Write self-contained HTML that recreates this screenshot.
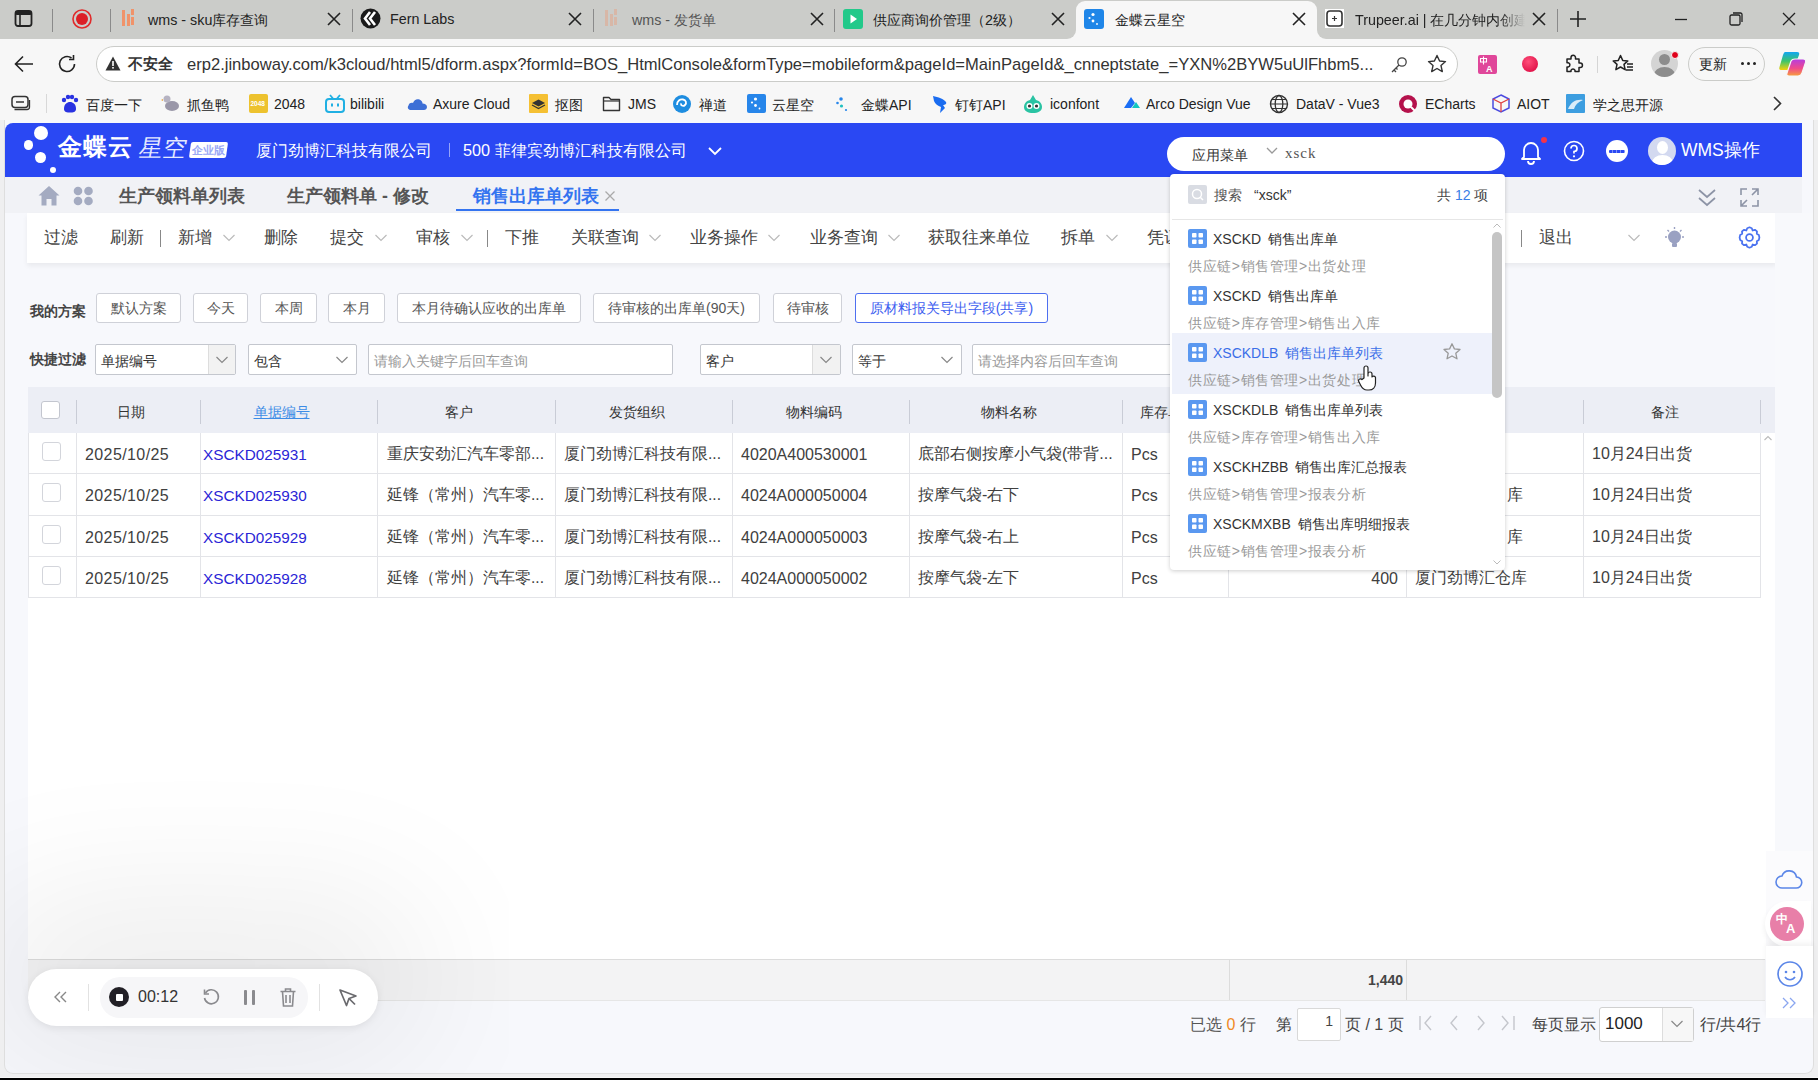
<!DOCTYPE html>
<html><head><meta charset="utf-8">
<style>
*{margin:0;padding:0;box-sizing:border-box;}
html,body{width:1818px;height:1080px;overflow:hidden;background:#f7f7f7;font-family:"Liberation Sans",sans-serif;color:#333;}
.a{position:absolute;}
.t{position:absolute;white-space:nowrap;line-height:1.15;}
/* browser chrome */
#tabbar{left:0;top:0;width:1818px;height:39px;background:#cbccc9;}
#toolbar{left:0;top:39px;width:1818px;height:47px;background:#f7f7f7;}
#bookmarks{left:0;top:86px;width:1818px;height:36px;background:#f7f7f7;}
.tabtxt{font-size:14.3px;color:#222;top:11px;}
.tabx{font-size:18px;color:#222;top:7px;}
.sep{width:1px;background:#8a8a8a;}
#page{left:0;top:120px;width:1818px;height:957px;background:#efeff0;}
#frame{left:4px;top:120px;width:1810px;height:954px;background:#f7f8fc;border:1px solid #dedede;border-top:none;border-radius:0 0 9px 9px;}
#black{left:0;top:1078px;width:1818px;height:2px;background:#000;}
.cj{display:inline-block;width:1em;height:1em;vertical-align:-0.12em;position:relative}.cj::after{content:"";position:absolute;left:.1em;right:.1em;top:.07em;bottom:.07em;background:currentColor;opacity:.32;border-radius:.08em}.cjp{display:inline-block;width:1em;height:1em}.cjb::after{opacity:.45}
</style></head><body>
<div id="tabbar" class="a"></div>
<div id="toolbar" class="a"></div>
<!-- TABBAR -->
<svg class="a" style="left:14px;top:9px" width="20" height="20" viewBox="0 0 20 20"><rect x="1.5" y="2" width="16" height="15" rx="2.5" fill="none" stroke="#222" stroke-width="1.8"/><rect x="1.5" y="2" width="16" height="4" rx="1.5" fill="#222"/><line x1="6" y1="5" x2="6" y2="17" stroke="#222" stroke-width="1.6"/></svg>
<div class="a sep" style="left:52px;top:9px;height:23px"></div>
<svg class="a" style="left:71px;top:8px" width="22" height="22" viewBox="0 0 22 22"><circle cx="11" cy="11" r="9" fill="none" stroke="#e02a2a" stroke-width="1.6"/><circle cx="11" cy="11" r="6" fill="#dc1f26"/></svg>
<div class="a sep" style="left:110px;top:9px;height:23px"></div>
<svg class="a" style="left:121px;top:8px" width="15" height="20" viewBox="0 0 15 20"><rect x="1" y="2" width="3" height="16" fill="#f0936a"/><rect x="6" y="6" width="3" height="12" fill="#f0936a"/><rect x="10" y="1" width="3" height="6" fill="#f0936a"/><rect x="10" y="9" width="3" height="8" fill="#f0936a"/></svg>
<div class="t tabtxt" style="padding-top:.08em;left:148px">wms - sku库存查询</div>
<svg class="a" style="left:326px;top:11px" width="16" height="16" viewBox="0 0 16 16"><path d="M2 2L14 14M14 2L2 14" stroke="#222" stroke-width="1.6"/></svg>
<div class="a sep" style="left:352px;top:9px;height:23px"></div>
<svg class="a" style="left:360px;top:8px" width="21" height="21" viewBox="0 0 21 21"><circle cx="10.5" cy="10.5" r="10" fill="#1a1a1a"/><path d="M10 4L5 10.5L10 17M15 4L10 10.5L15 17" fill="none" stroke="#fff" stroke-width="2.6"/></svg>
<div class="t tabtxt" style="left:390px">Fern Labs</div>
<svg class="a" style="left:567px;top:11px" width="16" height="16" viewBox="0 0 16 16"><path d="M2 2L14 14M14 2L2 14" stroke="#222" stroke-width="1.6"/></svg>
<div class="a sep" style="left:593px;top:9px;height:23px"></div>
<svg class="a" style="left:604px;top:8px" width="15" height="20" viewBox="0 0 15 20" opacity="0.35"><rect x="1" y="2" width="3" height="16" fill="#f0936a"/><rect x="6" y="6" width="3" height="12" fill="#f0936a"/><rect x="10" y="1" width="3" height="6" fill="#f0936a"/><rect x="10" y="9" width="3" height="8" fill="#f0936a"/></svg>
<div class="t tabtxt" style="padding-top:.08em;left:632px;color:#555">wms - 发货单</div>
<svg class="a" style="left:809px;top:11px" width="16" height="16" viewBox="0 0 16 16"><path d="M2 2L14 14M14 2L2 14" stroke="#222" stroke-width="1.6"/></svg>
<div class="a sep" style="left:834px;top:9px;height:23px"></div>
<svg class="a" style="left:843px;top:9px" width="20" height="20" viewBox="0 0 20 20"><rect x="0" y="0" width="20" height="20" rx="3" fill="#22c98a"/><path d="M7.5 5.5L14 10L7.5 14.5Z" fill="#fff"/></svg>
<div class="t tabtxt" style="padding-top:.08em;left:873px">供应商询价管理（2级）</div>
<svg class="a" style="left:1050px;top:11px" width="16" height="16" viewBox="0 0 16 16"><path d="M2 2L14 14M14 2L2 14" stroke="#222" stroke-width="1.6"/></svg>
<!-- active tab -->
<div class="a" style="left:1066px;top:28px;width:261px;height:12px;background:#f7f7f7"></div><div class="a" style="left:1066px;top:0px;width:10px;height:39px;background:#cbccc9;border-radius:0 0 9px 0"></div><div class="a" style="left:1317px;top:0px;width:10px;height:39px;background:#cbccc9;border-radius:0 0 0 9px"></div><div class="a" style="left:1076px;top:1px;width:241px;height:40px;background:#f7f7f7;border-radius:9px 9px 0 0;"></div>
<svg class="a" style="left:1084px;top:9px" width="20" height="20" viewBox="0 0 20 20"><rect x="0" y="0" width="20" height="20" rx="3" fill="#1f86e8"/><circle cx="9" cy="5.5" r="1.6" fill="#fff"/><circle cx="5.5" cy="9" r="1.1" fill="#fff"/><circle cx="9" cy="12" r="1.4" fill="#fff"/><circle cx="13" cy="15" r="0.9" fill="#fff"/></svg>
<div class="t tabtxt" style="padding-top:.08em;left:1115px">金蝶云星空</div>
<svg class="a" style="left:1291px;top:11px" width="16" height="16" viewBox="0 0 16 16"><path d="M2 2L14 14M14 2L2 14" stroke="#222" stroke-width="1.6"/></svg>
<svg class="a" style="left:1325px;top:9px" width="19" height="19" viewBox="0 0 19 19"><rect x="0" y="0" width="19" height="19" fill="#fff"/><rect x="2" y="2" width="15" height="15" rx="3" fill="none" stroke="#333" stroke-width="1.6"/><path d="M9.5 7V12M7 9.5H12" stroke="#333" stroke-width="1.2"/></svg>
<div class="t tabtxt" style="padding-top:.08em;left:1355px;width:170px;overflow:hidden;-webkit-mask-image:linear-gradient(90deg,#000 85%,transparent)">Trupeer.ai | 在几分钟内创建</div>
<svg class="a" style="left:1531px;top:11px" width="16" height="16" viewBox="0 0 16 16"><path d="M2 2L14 14M14 2L2 14" stroke="#222" stroke-width="1.6"/></svg>
<div class="a sep" style="left:1557px;top:9px;height:23px"></div>
<svg class="a" style="left:1569px;top:10px" width="18" height="18" viewBox="0 0 18 18"><path d="M9 1V17M1 9H17" stroke="#222" stroke-width="1.6"/></svg>
<svg class="a" style="left:1673px;top:11px" width="16" height="16" viewBox="0 0 16 16"><path d="M2 8.5H14" stroke="#222" stroke-width="1.3"/></svg>
<svg class="a" style="left:1728px;top:11px" width="16" height="16" viewBox="0 0 16 16"><rect x="2" y="4" width="10" height="10" rx="1.5" fill="none" stroke="#222" stroke-width="1.3"/><path d="M5 2H12.5A1.5 1.5 0 0 1 14 3.5V11" fill="none" stroke="#222" stroke-width="1.3"/></svg>
<svg class="a" style="left:1781px;top:11px" width="16" height="16" viewBox="0 0 16 16"><path d="M2 2L14 14M14 2L2 14" stroke="#222" stroke-width="1.3"/></svg>

<div id="bookmarks" class="a"></div>

<!-- TOOLBAR -->
<svg class="a" style="left:13px;top:53px" width="22" height="22" viewBox="0 0 22 22"><path d="M20 11H3M10 3.5L2.5 11L10 18.5" fill="none" stroke="#222" stroke-width="1.6"/></svg>
<svg class="a" style="left:56px;top:53px" width="22" height="22" viewBox="0 0 22 22"><path d="M18.5 11A7.5 7.5 0 1 1 15.5 5" fill="none" stroke="#222" stroke-width="1.6"/><path d="M17.5 2V6.5H13" fill="none" stroke="#222" stroke-width="1.6"/></svg>
<div class="a" style="left:96px;top:46px;width:1362px;height:36px;background:#fff;border:1px solid #cbccc9;border-radius:18px;"></div>
<svg class="a" style="left:105px;top:56px" width="16" height="15" viewBox="0 0 16 15"><path d="M8 0.5L15.5 14.5H0.5Z" fill="#333"/><rect x="7.2" y="5" width="1.6" height="5" fill="#fff"/><rect x="7.2" y="11" width="1.6" height="1.6" fill="#fff"/></svg>
<div class="t" style="padding-top:.08em;left:128px;top:54px;font-size:15px;font-weight:bold;color:#333">不安全</div>
<div class="t" style="left:187px;top:55px;font-size:16.57px;color:#333">erp2.jinboway.com/k3cloud/html5/dform.aspx?formId=BOS_HtmlConsole&amp;formType=mobileform&amp;pageId=MainPageId&amp;_cnneptstate_=YXN%2BYW5uUlFhbm5...</div>
<svg class="a" style="left:1390px;top:56px" width="18" height="18" viewBox="0 0 18 18"><circle cx="12" cy="6" r="4.2" fill="none" stroke="#444" stroke-width="1.3"/><path d="M9 9L2 16M4 14L6 16M6 12L7.5 13.5" fill="none" stroke="#444" stroke-width="1.3"/></svg>
<svg class="a" style="left:1427px;top:54px" width="20" height="20" viewBox="0 0 20 20"><path d="M10 1.5L12.6 7L18.5 7.6L14 11.6L15.3 17.6L10 14.5L4.7 17.6L6 11.6L1.5 7.6L7.4 7Z" fill="none" stroke="#333" stroke-width="1.4" stroke-linejoin="round"/></svg>
<svg class="a" style="left:1478px;top:55px" width="19" height="19" viewBox="0 0 19 19"><rect width="19" height="19" rx="2" fill="#e0479a"/><path d="M2.5 3.5H8.5V7H2.5Z M5.5 1.5V9.5" fill="none" stroke="#fff" stroke-width="1.1"/><text x="8" y="17" font-size="9" font-weight="bold" fill="#fff" font-family="Liberation Sans">A</text></svg>
<div class="a" style="left:1522px;top:56px;width:16px;height:16px;border-radius:50%;background:radial-gradient(circle at 40% 35%,#ff4f7a,#d8003a)"></div>
<svg class="a" style="left:1563px;top:54px" width="21" height="21" viewBox="0 0 21 21"><path d="M8 3.5A2.2 2.2 0 0 1 12.5 3.5V5H16V9H17.2A2.2 2.2 0 0 1 17.2 13.5H16V17.5H12V16.2A2.2 2.2 0 0 0 8 16.2V17.5H4V13H5.2A2.2 2.2 0 0 0 5.2 8.7H4V5H8Z" fill="none" stroke="#222" stroke-width="1.5" stroke-linejoin="round"/></svg>
<div class="a" style="left:1597px;top:56px;width:1px;height:17px;background:#d5d5d5"></div>
<svg class="a" style="left:1612px;top:54px" width="22" height="20" viewBox="0 0 22 20"><path d="M8.5 1.5L10.7 6.4L15.8 6.9L12 10.4L13.1 15.6L8.5 13L3.9 15.6L5 10.4L1.2 6.9L6.3 6.4Z" fill="none" stroke="#222" stroke-width="1.5" stroke-linejoin="round"/><path d="M15 10H21M15 13H21M13.5 16H21" stroke="#222" stroke-width="1.4"/></svg>
<div class="a" style="left:1651px;top:50px;width:27px;height:27px;border-radius:50%;background:#d4d4d4;overflow:hidden"><div class="a" style="left:8px;top:4px;width:11px;height:11px;border-radius:50%;background:#8d8d8d"></div><div class="a" style="left:3px;top:17px;width:21px;height:16px;border-radius:50%;background:#8d8d8d"></div></div>
<div class="a" style="left:1671px;top:51px;width:8px;height:8px;border-radius:50%;background:#e0001a;border:1px solid #f7f7f7"></div>
<div class="a" style="left:1688px;top:47px;width:77px;height:34px;border:1px solid #cbccc9;border-radius:17px;"></div>
<div class="t" style="padding-top:.08em;left:1699px;top:55px;font-size:14px;color:#222">更新</div>
<div class="a" style="left:1741px;top:62px;width:3px;height:3px;border-radius:50%;background:#222"></div><div class="a" style="left:1747px;top:62px;width:3px;height:3px;border-radius:50%;background:#222"></div><div class="a" style="left:1753px;top:62px;width:3px;height:3px;border-radius:50%;background:#222"></div>
<svg class="a" style="left:1778px;top:51px" width="29" height="26" viewBox="0 0 29 26"><defs><linearGradient id="cpl" x1="0" y1="0" x2="0" y2="1"><stop offset="0" stop-color="#12a6f2"/><stop offset=".5" stop-color="#3cc46c"/><stop offset="1" stop-color="#f4d20a"/></linearGradient><linearGradient id="cpr" x1="0" y1="0" x2="0" y2="1"><stop offset="0" stop-color="#b53ce2"/><stop offset=".55" stop-color="#f04a8c"/><stop offset="1" stop-color="#f7a03a"/></linearGradient></defs><path d="M7 1L19 1Q22 1 21 4L16 17Q15 19 12 19L3 19Q0.5 19 1.5 16L5 4Q6 1 7 1Z" fill="url(#cpl)"/><path d="M17 8L25 8Q28.5 8 27.5 11.5L24 22Q23 25 20 25L11 25Q8 25 9 22L13 10Q14 8 17 8Z" fill="url(#cpr)" stroke="#f7f7f7" stroke-width="1.2"/></svg>
<!-- BOOKMARKS -->
<svg class="a" style="left:11px;top:95px" width="20" height="17" viewBox="0 0 20 17"><rect x="1" y="1.5" width="16" height="11" rx="3" fill="none" stroke="#333" stroke-width="1.5"/><path d="M5 7H13" stroke="#333" stroke-width="1.5"/><path d="M3.5 14.5H16A2.5 2.5 0 0 0 18.5 12V5" fill="none" stroke="#333" stroke-width="1.3"/></svg>
<div class="a" style="left:46px;top:94px;width:1px;height:19px;background:#d8d8d8"></div>
<svg class="a" style="left:60px;top:94px" width="20" height="20" viewBox="0 0 20 20"><circle cx="4" cy="6" r="2.2" fill="#2932e1"/><circle cx="8" cy="3" r="2.2" fill="#2932e1"/><circle cx="12" cy="3" r="2.2" fill="#2932e1"/><circle cx="16" cy="6" r="2.2" fill="#2932e1"/><path d="M4 15C4 10 7 8 10 8C13 8 16 10 16 15C16 18 13 18.5 10 18.5C7 18.5 4 18 4 15Z" fill="#2932e1"/></svg>
<div class="t" style="padding-top:.08em;left:86px;top:96px;font-size:14px;color:#222">百度一下</div>
<svg class="a" style="left:161px;top:94px" width="20" height="20" viewBox="0 0 20 20"><ellipse cx="11" cy="12" rx="7" ry="5" fill="#9a97a8"/><circle cx="6" cy="5" r="3.5" fill="#b6b3c2"/><path d="M2 5L0 6L2 7Z" fill="#e8a33d"/></svg>
<div class="t" style="padding-top:.08em;left:187px;top:96px;font-size:14px;color:#222">抓鱼鸭</div>
<svg class="a" style="left:249px;top:94px" width="20" height="20" viewBox="0 0 20 20"><rect x="0" y="0" width="19" height="19" rx="2" fill="#edc22e"/><text x="1.5" y="12" font-size="6.5" fill="#fff" font-family="Liberation Sans" font-weight="bold">2048</text></svg>
<div class="t" style="left:274px;top:96px;font-size:14px;color:#222">2048</div>
<svg class="a" style="left:325px;top:94px" width="20" height="20" viewBox="0 0 20 20"><rect x="1" y="5" width="18" height="13" rx="3" fill="none" stroke="#20b0e3" stroke-width="2"/><path d="M5 1L8 4.5M15 1L12 4.5" stroke="#20b0e3" stroke-width="1.8"/><rect x="6" y="9.5" width="2" height="3" fill="#20b0e3"/><rect x="12" y="9.5" width="2" height="3" fill="#20b0e3"/></svg>
<div class="t" style="left:350px;top:96px;font-size:14px;color:#222">bilibili</div>
<svg class="a" style="left:407px;top:94px" width="20" height="20" viewBox="0 0 20 20"><path d="M4 16C1 16 0 13.5 1.5 11.5C2 9 4.5 8.5 6 9C7 5.5 10 4.5 12.5 5.5C15 6.5 15.5 8.5 15.5 9.5C18 9.5 20 11 20 13C20 15 18.5 16 17 16Z" fill="#3d6fd6"/></svg>
<div class="t" style="left:433px;top:96px;font-size:14px;color:#222">Axure Cloud</div>
<svg class="a" style="left:529px;top:94px" width="20" height="20" viewBox="0 0 20 20"><rect x="0" y="0" width="19" height="19" rx="1" fill="#f5c033"/><path d="M3 9L9.5 5.5L16 9L9.5 12.5Z" fill="#333"/><path d="M3 11L9.5 14.5L16 11" fill="none" stroke="#333" stroke-width="1.3"/></svg>
<div class="t" style="padding-top:.08em;left:555px;top:96px;font-size:14px;color:#222">抠图</div>
<svg class="a" style="left:602px;top:94px" width="20" height="20" viewBox="0 0 20 20"><path d="M1.5 3.5H7L9 5.5H17.5V16.5H1.5Z" fill="none" stroke="#333" stroke-width="1.4" stroke-linejoin="round"/><path d="M1.5 7H17.5" stroke="#333" stroke-width="1.2"/></svg>
<div class="t" style="left:628px;top:96px;font-size:14px;color:#222">JMS</div>
<svg class="a" style="left:672px;top:94px" width="20" height="20" viewBox="0 0 20 20"><circle cx="10" cy="10" r="9" fill="#1e8de0"/><path d="M5 11C5 7 8 5 11 5.5C14 6 15 9 13 11C11 13 8 11 9.5 9.5" fill="none" stroke="#fff" stroke-width="1.8"/></svg>
<div class="t" style="padding-top:.08em;left:699px;top:96px;font-size:14px;color:#222">禅道</div>
<svg class="a" style="left:747px;top:94px" width="20" height="20" viewBox="0 0 20 20"><rect x="0" y="0" width="19" height="19" rx="2" fill="#2786ea"/><circle cx="8.5" cy="5" r="1.6" fill="#fff"/><circle cx="5" cy="8.5" r="1.1" fill="#fff"/><circle cx="8.5" cy="11.5" r="1.4" fill="#fff"/><circle cx="12.5" cy="14.5" r="0.9" fill="#fff"/></svg>
<div class="t" style="padding-top:.08em;left:772px;top:96px;font-size:14px;color:#222">云星空</div>
<svg class="a" style="left:835px;top:94px" width="20" height="20" viewBox="0 0 20 20"><circle cx="6" cy="5" r="1.8" fill="#2786ea"/><circle cx="2.5" cy="9" r="1.3" fill="#2786ea"/><circle cx="6.5" cy="12" r="1.6" fill="#20c0c0"/><circle cx="11" cy="16" r="1.1" fill="#2786ea"/></svg>
<div class="t" style="padding-top:.08em;left:861px;top:96px;font-size:14px;color:#222">金蝶API</div>
<svg class="a" style="left:931px;top:94px" width="20" height="20" viewBox="0 0 20 20"><path d="M2 2C7 3 13 5 15 8C16 10 14 11 12 11L14 14L9 19L10 13C7 12 4 10 3 7Z" fill="#1a6cf0"/></svg>
<div class="t" style="padding-top:.08em;left:955px;top:96px;font-size:14px;color:#222">钉钉API</div>
<svg class="a" style="left:1023px;top:94px" width="20" height="20" viewBox="0 0 20 20"><path d="M10 1L13 6C17 7 19 10 19 13C19 17 15 19 10 19C5 19 1 17 1 13C1 10 3 7 7 6Z" fill="#2ac3a3"/><circle cx="6.5" cy="12" r="3" fill="#fff"/><circle cx="13.5" cy="12" r="3" fill="#fff"/><circle cx="6.5" cy="12" r="1.6" fill="#333"/><circle cx="13.5" cy="12" r="1.6" fill="#333"/></svg>
<div class="t" style="left:1050px;top:96px;font-size:14px;color:#222">iconfont</div>
<svg class="a" style="left:1123px;top:94px" width="20" height="20" viewBox="0 0 20 20"><path d="M1 14L8 3L12 9L8 14Z" fill="#1b6ef5"/><path d="M9 14L13 8L17 14Z" fill="#11c6bf"/></svg>
<div class="t" style="left:1146px;top:96px;font-size:14px;color:#222">Arco Design Vue</div>
<svg class="a" style="left:1269px;top:94px" width="20" height="20" viewBox="0 0 20 20"><circle cx="10" cy="10" r="8.5" fill="none" stroke="#333" stroke-width="1.4"/><ellipse cx="10" cy="10" rx="3.8" ry="8.5" fill="none" stroke="#333" stroke-width="1.3"/><path d="M1.5 10H18.5M3 5.5H17M3 14.5H17" stroke="#333" stroke-width="1.2"/></svg>
<div class="t" style="left:1296px;top:96px;font-size:14px;color:#222">DataV - Vue3</div>
<svg class="a" style="left:1398px;top:94px" width="20" height="20" viewBox="0 0 20 20"><circle cx="10" cy="10" r="9" fill="#b5124c"/><circle cx="10" cy="10" r="4.5" fill="#fff"/><path d="M13 13L17 17" stroke="#fff" stroke-width="2"/></svg>
<div class="t" style="left:1425px;top:96px;font-size:14px;color:#222">ECharts</div>
<svg class="a" style="left:1491px;top:94px" width="20" height="20" viewBox="0 0 20 20"><path d="M10 1L18 5V14L10 18L2 14V5Z" fill="none" stroke="#4c4ce0" stroke-width="1.5"/><path d="M2 5L10 9L18 5M10 9V18" fill="none" stroke="#e04040" stroke-width="1.3"/></svg>
<div class="t" style="left:1517px;top:96px;font-size:14px;color:#222">AIOT</div>
<svg class="a" style="left:1566px;top:94px" width="20" height="20" viewBox="0 0 20 20"><rect x="0" y="0" width="19" height="19" rx="1" fill="#3d9ee0"/><path d="M2 15C5 8 10 5 17 6C12 8 9 11 8 15Z" fill="#fff" opacity=".8"/></svg>
<div class="t" style="padding-top:.08em;left:1593px;top:96px;font-size:14px;color:#222">学之思开源</div>
<svg class="a" style="left:1769px;top:95px" width="16" height="17" viewBox="0 0 16 17"><path d="M5 2L11.5 8.5L5 15" fill="none" stroke="#333" stroke-width="1.6"/></svg>
<div id="page" class="a"></div>
<div id="frame" class="a"></div>
<!--PAGE_START-->
<div class="a" style="left:5px;top:123px;width:1797px;height:54px;background:#2a48f3;border-radius:8px 0 0 0"></div>
<div class="a" style="left:33.8px;top:126px;width:14px;height:14px;border-radius:50%;background:#fff"></div>
<div class="a" style="left:23.55px;top:140.25px;width:9.5px;height:9.5px;border-radius:50%;background:#fff"></div>
<div class="a" style="left:35.2px;top:152.1px;width:10.8px;height:10.8px;border-radius:50%;background:#fff"></div>
<div class="a" style="left:49.5px;top:166.55px;width:6.4px;height:6.4px;border-radius:50%;background:#fff"></div>
<div class="t" style="padding-top:.08em;left:58px;top:132.5px;font-size:23.5px;color:#fff;font-weight:bold;letter-spacing:1px">金蝶云</div>
<div class="t" style="padding-top:.08em;left:137px;top:132.5px;font-size:23.5px;color:#e4e9ff;transform:skewX(-10deg);transform-origin:0 100%">星空</div>
<div class="a" style="left:190px;top:142px;width:37px;height:16px;background:#fff;border-radius:2px;transform:skewX(-8deg)"></div>
<div class="t" style="padding-top:.08em;left:192px;top:143px;font-size:11px;color:#9aa8f5;font-weight:bold;letter-spacing:0px">企业版</div>
<div class="t" style="padding-top:.08em;left:256px;top:140px;font-size:16.25px;color:#fff">厦门劲博汇科技有限公司</div>
<div class="a" style="left:449px;top:143px;width:1px;height:14px;background:rgba(255,255,255,.5)"></div>
<div class="t" style="padding-top:.08em;left:463px;top:140px;font-size:16.25px;color:#fff">500 菲律宾劲博汇科技有限公司</div>
<svg class="a" style="left:707px;top:144px" width="16" height="14" viewBox="0 0 16 14"><path d="M2 4L8 10L14 4" fill="none" stroke="#fff" stroke-width="1.8"/></svg>
<div class="a" style="left:1167px;top:137px;width:338px;height:34px;background:#fff;border-radius:17px"></div>
<div class="t" style="padding-top:.08em;left:1192px;top:146px;font-size:14px;color:#333">应用菜单</div>
<svg class="a" style="left:1265px;top:146px" width="14" height="10" viewBox="0 0 14 10"><path d="M2 2L7 7L12 2" fill="none" stroke="#999" stroke-width="1.3"/></svg>
<div class="t" style="left:1285px;top:145px;font-size:15px;color:#555;font-family:'Liberation Serif',serif;letter-spacing:1px">xsck</div>
<svg class="a" style="left:1519px;top:139px" width="24" height="26" viewBox="0 0 24 26"><path d="M5 18V11A7 7 0 0 1 19 11V18L21 20H3Z" fill="none" stroke="#fff" stroke-width="1.8" stroke-linejoin="round"/><path d="M9 22A3 3 0 0 0 15 22" fill="none" stroke="#fff" stroke-width="1.8"/></svg>
<div class="a" style="left:1541px;top:137px;width:6px;height:6px;border-radius:50%;background:#f5334a"></div>
<svg class="a" style="left:1563px;top:140px" width="22" height="22" viewBox="0 0 22 22"><circle cx="11" cy="11" r="9.5" fill="none" stroke="#fff" stroke-width="1.6"/><path d="M8 8.5A3 3 0 1 1 11 11.5V13.5" fill="none" stroke="#fff" stroke-width="1.7"/><circle cx="11" cy="16.3" r="1.1" fill="#fff"/></svg>
<div class="a" style="left:1606px;top:140px;width:22px;height:22px;border-radius:50%;background:#fff"></div>
<div class="a" style="left:1609px;top:150px;width:16px;height:2.5px;background:repeating-linear-gradient(90deg,#2a48f3 0 3px,#7d92f6 3px 4px);border-radius:1px"></div>
<div class="a" style="left:1648px;top:137px;width:28px;height:28px;border-radius:50%;background:#d3d9f0;overflow:hidden"><div class="a" style="left:8.5px;top:4px;width:11px;height:13px;border-radius:50%;background:#fff"></div><div class="a" style="left:3.5px;top:18px;width:21px;height:16px;border-radius:50%;background:#fff"></div></div>
<div class="t" style="padding-top:.08em;left:1681px;top:139px;font-size:17.5px;color:#fff">WMS操作</div>
<div class="a" style="left:5px;top:177px;width:1797px;height:36px;background:#f1f2f6"></div>
<svg class="a" style="left:38px;top:185px" width="22" height="21" viewBox="0 0 22 21"><path d="M11 1L21.5 10.5H18.5V20.5H13.5V14H8.5V20.5H3.5V10.5H0.5Z" fill="#a4abc1"/></svg>
<svg class="a" style="left:73px;top:186px" width="21" height="20" viewBox="0 0 21 20"><circle cx="5" cy="5" r="4.3" fill="#a4abc1"/><circle cx="15.5" cy="5" r="4.3" fill="#a4abc1"/><circle cx="5" cy="15" r="4.3" fill="#a4abc1"/><circle cx="15.5" cy="15" r="4.3" fill="#a4abc1"/></svg>
<div class="t" style="padding-top:.08em;left:119px;top:185px;font-size:17.7px;color:#555;font-weight:bold">生产领料单列表</div>
<div class="t" style="padding-top:.08em;left:287px;top:185px;font-size:17.7px;color:#555;font-weight:bold">生产领料单 - 修改</div>
<div class="t" style="padding-top:.08em;left:473px;top:185px;font-size:17.7px;color:#3474f0;font-weight:bold">销售出库单列表</div>
<svg class="a" style="left:604px;top:190px" width="12" height="12" viewBox="0 0 12 12"><path d="M1.5 1.5L10.5 10.5M10.5 1.5L1.5 10.5" stroke="#aaa" stroke-width="1.3"/></svg>
<div class="a" style="left:456px;top:209px;width:163px;height:2px;background:#3474f0"></div>
<svg class="a" style="left:1696px;top:187px" width="22" height="22" viewBox="0 0 22 22"><path d="M3 3L11 10L19 3M3 11L11 18L19 11" fill="none" stroke="#8d94a6" stroke-width="1.7"/></svg>
<svg class="a" style="left:1739px;top:187px" width="21" height="21" viewBox="0 0 21 21"><path d="M2 8V2H8M13 2H19V8M19 13V19H13M8 19H2V13M19 2L13 8M2 19L8 13" fill="none" stroke="#8d94a6" stroke-width="1.6"/></svg>
<div class="a" style="left:27px;top:213px;width:1750px;height:50px;background:#fff;box-shadow:0 3px 5px rgba(0,0,0,0.06)"></div>
<div class="t" style="padding-top:.08em;left:44px;top:227px;font-size:16.5px;color:#444">过滤</div>
<div class="t" style="padding-top:.08em;left:110px;top:227px;font-size:16.5px;color:#444">刷新</div>
<div class="t" style="padding-top:.08em;left:178px;top:227px;font-size:16.5px;color:#444">新增</div>
<svg class="a" style="left:222px;top:233px" width="14" height="10" viewBox="0 0 14 10"><path d="M1.5 2L7 7.5L12.5 2" fill="none" stroke="#bbb" stroke-width="1.2"/></svg>
<div class="t" style="padding-top:.08em;left:264px;top:227px;font-size:16.5px;color:#444">删除</div>
<div class="t" style="padding-top:.08em;left:330px;top:227px;font-size:16.5px;color:#444">提交</div>
<svg class="a" style="left:374px;top:233px" width="14" height="10" viewBox="0 0 14 10"><path d="M1.5 2L7 7.5L12.5 2" fill="none" stroke="#bbb" stroke-width="1.2"/></svg>
<div class="t" style="padding-top:.08em;left:416px;top:227px;font-size:16.5px;color:#444">审核</div>
<svg class="a" style="left:460px;top:233px" width="14" height="10" viewBox="0 0 14 10"><path d="M1.5 2L7 7.5L12.5 2" fill="none" stroke="#bbb" stroke-width="1.2"/></svg>
<div class="t" style="padding-top:.08em;left:505px;top:227px;font-size:16.5px;color:#444">下推</div>
<div class="t" style="padding-top:.08em;left:571px;top:227px;font-size:16.5px;color:#444">关联查询</div>
<svg class="a" style="left:648px;top:233px" width="14" height="10" viewBox="0 0 14 10"><path d="M1.5 2L7 7.5L12.5 2" fill="none" stroke="#bbb" stroke-width="1.2"/></svg>
<div class="t" style="padding-top:.08em;left:690px;top:227px;font-size:16.5px;color:#444">业务操作</div>
<svg class="a" style="left:767px;top:233px" width="14" height="10" viewBox="0 0 14 10"><path d="M1.5 2L7 7.5L12.5 2" fill="none" stroke="#bbb" stroke-width="1.2"/></svg>
<div class="t" style="padding-top:.08em;left:810px;top:227px;font-size:16.5px;color:#444">业务查询</div>
<svg class="a" style="left:887px;top:233px" width="14" height="10" viewBox="0 0 14 10"><path d="M1.5 2L7 7.5L12.5 2" fill="none" stroke="#bbb" stroke-width="1.2"/></svg>
<div class="t" style="padding-top:.08em;left:928px;top:227px;font-size:16.5px;color:#444">获取往来单位</div>
<div class="t" style="padding-top:.08em;left:1061px;top:227px;font-size:16.5px;color:#444">拆单</div>
<svg class="a" style="left:1105px;top:233px" width="14" height="10" viewBox="0 0 14 10"><path d="M1.5 2L7 7.5L12.5 2" fill="none" stroke="#bbb" stroke-width="1.2"/></svg>
<div class="t" style="padding-top:.08em;left:1147px;top:227px;font-size:16.5px;color:#444">凭证</div>
<div class="t" style="padding-top:.08em;left:1539px;top:227px;font-size:16.5px;color:#444">退出</div>
<div class="a" style="left:160px;top:230px;width:1px;height:17px;background:#888"></div>
<div class="a" style="left:487px;top:230px;width:1px;height:17px;background:#888"></div>
<div class="a" style="left:1521px;top:230px;width:1px;height:17px;background:#888"></div>
<svg class="a" style="left:1627px;top:233px" width="14" height="10" viewBox="0 0 14 10"><path d="M1.5 2L7 7.5L12.5 2" fill="none" stroke="#bbb" stroke-width="1.2"/></svg>
<svg class="a" style="left:1662px;top:226px" width="25" height="25" viewBox="0 0 25 25"><circle cx="12.5" cy="11" r="6.5" fill="#9aa1c2"/><rect x="10" y="17" width="5" height="4" rx="1" fill="#9aa1c2"/><path d="M12.5 1V3M3 11H5M20 11H22M5.5 4L7 5.5M19.5 4L18 5.5" stroke="#9aa1c2" stroke-width="1.4"/></svg>
<svg class="a" style="left:1737px;top:225px" width="25" height="25" viewBox="0 0 24 24"><path d="M12 2.2L14.2 3.1L15 5.3L17.2 4.6L19.2 6.1L19 8.5L21 9.7L21.5 12L21 14.3L19 15.5L19.2 17.9L17.2 19.4L15 18.7L14.2 20.9L12 21.8L9.8 20.9L9 18.7L6.8 19.4L4.8 17.9L5 15.5L3 14.3L2.5 12L3 9.7L5 8.5L4.8 6.1L6.8 4.6L9 5.3L9.8 3.1Z" fill="none" stroke="#4a72f0" stroke-width="1.7" stroke-linejoin="round"/><circle cx="12" cy="12" r="3.3" fill="none" stroke="#4a72f0" stroke-width="1.7"/></svg>
<div class="t" style="padding-top:.08em;left:30px;top:302px;font-size:14px;color:#444;font-weight:bold">我的方案</div>
<div class="a" style="left:96px;top:293px;width:85px;height:30px;border:1px solid #cfd1d8;border-radius:3px;background:#fff;color:#555;font-size:14px;line-height:28px;text-align:center;white-space:nowrap">默认方案</div>
<div class="a" style="left:193px;top:293px;width:55px;height:30px;border:1px solid #cfd1d8;border-radius:3px;background:#fff;color:#555;font-size:14px;line-height:28px;text-align:center;white-space:nowrap">今天</div>
<div class="a" style="left:260px;top:293px;width:57px;height:30px;border:1px solid #cfd1d8;border-radius:3px;background:#fff;color:#555;font-size:14px;line-height:28px;text-align:center;white-space:nowrap">本周</div>
<div class="a" style="left:328px;top:293px;width:57px;height:30px;border:1px solid #cfd1d8;border-radius:3px;background:#fff;color:#555;font-size:14px;line-height:28px;text-align:center;white-space:nowrap">本月</div>
<div class="a" style="left:397px;top:293px;width:184px;height:30px;border:1px solid #cfd1d8;border-radius:3px;background:#fff;color:#555;font-size:14px;line-height:28px;text-align:center;white-space:nowrap">本月待确认应收的出库单</div>
<div class="a" style="left:593px;top:293px;width:167px;height:30px;border:1px solid #cfd1d8;border-radius:3px;background:#fff;color:#555;font-size:14px;line-height:28px;text-align:center;white-space:nowrap">待审核的出库单(90天)</div>
<div class="a" style="left:773px;top:293px;width:69px;height:30px;border:1px solid #cfd1d8;border-radius:3px;background:#fff;color:#555;font-size:14px;line-height:28px;text-align:center;white-space:nowrap">待审核</div>
<div class="a" style="left:855px;top:293px;width:193px;height:30px;border:1px solid #4e6ff0;border-radius:3px;background:#fff;color:#3d5ef0;font-size:14px;line-height:28px;text-align:center;white-space:nowrap">原材料报关导出字段(共享)</div>
<div class="t" style="padding-top:.08em;left:30px;top:350px;font-size:14px;color:#444;font-weight:bold">快捷过滤</div>
<div class="a" style="left:95px;top:344px;width:141px;height:31px;border:1px solid #c4c7ce;border-radius:2px;background:#fff"></div>
<div class="t" style="padding-top:.08em;left:101px;top:352px;font-size:14px;color:#333">单据编号</div>
<div class="a" style="left:208px;top:345px;width:27px;height:29px;background:#f2f2f2;border-left:1px solid #ddd"></div>
<svg class="a" style="left:215px;top:355px" width="14" height="10" viewBox="0 0 14 10"><path d="M1.5 2L7 7.5L12.5 2" fill="none" stroke="#888" stroke-width="1.2"/></svg>
<div class="a" style="left:248px;top:344px;width:109px;height:31px;border:1px solid #c4c7ce;border-radius:2px;background:#fff"></div>
<div class="t" style="padding-top:.08em;left:254px;top:352px;font-size:14px;color:#333">包含</div>
<svg class="a" style="left:335px;top:355px" width="14" height="10" viewBox="0 0 14 10"><path d="M1.5 2L7 7.5L12.5 2" fill="none" stroke="#888" stroke-width="1.2"/></svg>
<div class="a" style="left:368px;top:344px;width:305px;height:31px;border:1px solid #c4c7ce;border-radius:2px;background:#fff"></div>
<div class="t" style="padding-top:.08em;left:374px;top:352px;font-size:14px;color:#999">请输入关键字后回车查询</div>
<div class="a" style="left:700px;top:344px;width:141px;height:31px;border:1px solid #c4c7ce;border-radius:2px;background:#fff"></div>
<div class="t" style="padding-top:.08em;left:706px;top:352px;font-size:14px;color:#333">客户</div>
<div class="a" style="left:812px;top:345px;width:28px;height:29px;background:#f2f2f2;border-left:1px solid #ddd"></div>
<svg class="a" style="left:819px;top:355px" width="14" height="10" viewBox="0 0 14 10"><path d="M1.5 2L7 7.5L12.5 2" fill="none" stroke="#888" stroke-width="1.2"/></svg>
<div class="a" style="left:852px;top:344px;width:110px;height:31px;border:1px solid #c4c7ce;border-radius:2px;background:#fff"></div>
<div class="t" style="padding-top:.08em;left:858px;top:352px;font-size:14px;color:#333">等于</div>
<svg class="a" style="left:940px;top:355px" width="14" height="10" viewBox="0 0 14 10"><path d="M1.5 2L7 7.5L12.5 2" fill="none" stroke="#888" stroke-width="1.2"/></svg>
<div class="a" style="left:972px;top:344px;width:278px;height:31px;border:1px solid #c4c7ce;border-radius:2px;background:#fff"></div>
<div class="t" style="padding-top:.08em;left:978px;top:352px;font-size:14px;color:#999">请选择内容后回车查询</div>
<div class="a" style="left:28px;top:387px;width:1747px;height:46px;background:#eceef5"></div>
<div class="a" style="left:28px;top:433px;width:1748px;height:526px;background:#fff"></div>
<div class="a" style="left:76px;top:400px;width:1px;height:24px;background:#c9ccd6"></div>
<div class="a" style="left:200px;top:400px;width:1px;height:24px;background:#c9ccd6"></div>
<div class="a" style="left:377px;top:400px;width:1px;height:24px;background:#c9ccd6"></div>
<div class="a" style="left:555px;top:400px;width:1px;height:24px;background:#c9ccd6"></div>
<div class="a" style="left:732px;top:400px;width:1px;height:24px;background:#c9ccd6"></div>
<div class="a" style="left:909px;top:400px;width:1px;height:24px;background:#c9ccd6"></div>
<div class="a" style="left:1122px;top:400px;width:1px;height:24px;background:#c9ccd6"></div>
<div class="a" style="left:1228px;top:400px;width:1px;height:24px;background:#c9ccd6"></div>
<div class="a" style="left:1406px;top:400px;width:1px;height:24px;background:#c9ccd6"></div>
<div class="a" style="left:1583px;top:400px;width:1px;height:24px;background:#c9ccd6"></div>
<div class="a" style="left:1760px;top:400px;width:1px;height:24px;background:#c9ccd6"></div>
<div class="t" style="padding-top:.08em;left:76px;top:403px;width:110px;text-align:center;font-size:14px;color:#333">日期</div>
<div class="t" style="padding-top:.08em;left:200px;top:403px;width:163px;text-align:center;font-size:14px;color:#3c8ce6;text-decoration:underline">单据编号</div>
<div class="t" style="padding-top:.08em;left:377px;top:403px;width:164px;text-align:center;font-size:14px;color:#333">客户</div>
<div class="t" style="padding-top:.08em;left:555px;top:403px;width:163px;text-align:center;font-size:14px;color:#333">发货组织</div>
<div class="t" style="padding-top:.08em;left:732px;top:403px;width:163px;text-align:center;font-size:14px;color:#333">物料编码</div>
<div class="t" style="padding-top:.08em;left:909px;top:403px;width:199px;text-align:center;font-size:14px;color:#333">物料名称</div>
<div class="t" style="padding-top:.08em;left:1122px;top:403px;width:92px;text-align:center;font-size:14px;color:#333">库存单位</div>
<div class="t" style="padding-top:.08em;left:1583px;top:403px;width:163px;text-align:center;font-size:14px;color:#333">备注</div>
<div class="a" style="left:41px;top:401px;width:19px;height:18px;border:1px solid #c3c6cf;border-radius:3px;background:#fff"></div>
<div class="a" style="left:28px;top:473px;width:1733px;height:1px;background:#e3e4e8"></div>
<div class="a" style="left:42px;top:442px;width:19px;height:19px;border:1px solid #d3d5db;border-radius:3px;background:#fff"></div>
<div class="t" style="left:85px;top:446px;font-size:16px;color:#404040;letter-spacing:0.4px">2025/10/25</div>
<div class="t" style="left:203px;top:446px;font-size:15.3px;color:#2a25d6">XSCKD025931</div>
<div class="t" style="padding-top:.08em;left:387px;top:444px;font-size:15.6px;color:#404040">重庆安劲汇汽车零部...</div>
<div class="t" style="padding-top:.08em;left:564px;top:444px;font-size:15.6px;color:#404040">厦门劲博汇科技有限...</div>
<div class="t" style="left:741px;top:446px;font-size:16px;color:#404040">4020A400530001</div>
<div class="t" style="padding-top:.08em;left:918px;top:444px;font-size:16px;color:#404040">底部右侧按摩小气袋(带背...</div>
<div class="t" style="left:1131px;top:446px;font-size:16px;color:#404040">Pcs</div>
<div class="t" style="padding-top:.08em;left:1592px;top:444px;font-size:16px;color:#404040">10月24日出货</div>
<div class="a" style="left:28px;top:515px;width:1733px;height:1px;background:#e3e4e8"></div>
<div class="a" style="left:42px;top:483px;width:19px;height:19px;border:1px solid #d3d5db;border-radius:3px;background:#fff"></div>
<div class="t" style="left:85px;top:487px;font-size:16px;color:#404040;letter-spacing:0.4px">2025/10/25</div>
<div class="t" style="left:203px;top:487px;font-size:15.3px;color:#2a25d6">XSCKD025930</div>
<div class="t" style="padding-top:.08em;left:387px;top:485px;font-size:15.6px;color:#404040">延锋（常州）汽车零...</div>
<div class="t" style="padding-top:.08em;left:564px;top:485px;font-size:15.6px;color:#404040">厦门劲博汇科技有限...</div>
<div class="t" style="left:741px;top:487px;font-size:16px;color:#404040">4024A000050004</div>
<div class="t" style="padding-top:.08em;left:918px;top:485px;font-size:16px;color:#404040">按摩气袋-右下</div>
<div class="t" style="left:1131px;top:487px;font-size:16px;color:#404040">Pcs</div>
<div class="t" style="padding-top:.08em;left:1507px;top:485px;font-size:16px;color:#404040">库</div>
<div class="t" style="padding-top:.08em;left:1592px;top:485px;font-size:16px;color:#404040">10月24日出货</div>
<div class="a" style="left:28px;top:556px;width:1733px;height:1px;background:#e3e4e8"></div>
<div class="a" style="left:42px;top:525px;width:19px;height:19px;border:1px solid #d3d5db;border-radius:3px;background:#fff"></div>
<div class="t" style="left:85px;top:529px;font-size:16px;color:#404040;letter-spacing:0.4px">2025/10/25</div>
<div class="t" style="left:203px;top:529px;font-size:15.3px;color:#2a25d6">XSCKD025929</div>
<div class="t" style="padding-top:.08em;left:387px;top:527px;font-size:15.6px;color:#404040">延锋（常州）汽车零...</div>
<div class="t" style="padding-top:.08em;left:564px;top:527px;font-size:15.6px;color:#404040">厦门劲博汇科技有限...</div>
<div class="t" style="left:741px;top:529px;font-size:16px;color:#404040">4024A000050003</div>
<div class="t" style="padding-top:.08em;left:918px;top:527px;font-size:16px;color:#404040">按摩气袋-右上</div>
<div class="t" style="left:1131px;top:529px;font-size:16px;color:#404040">Pcs</div>
<div class="t" style="padding-top:.08em;left:1507px;top:527px;font-size:16px;color:#404040">库</div>
<div class="t" style="padding-top:.08em;left:1592px;top:527px;font-size:16px;color:#404040">10月24日出货</div>
<div class="a" style="left:28px;top:597px;width:1733px;height:1px;background:#e3e4e8"></div>
<div class="a" style="left:42px;top:566px;width:19px;height:19px;border:1px solid #d3d5db;border-radius:3px;background:#fff"></div>
<div class="t" style="left:85px;top:570px;font-size:16px;color:#404040;letter-spacing:0.4px">2025/10/25</div>
<div class="t" style="left:203px;top:570px;font-size:15.3px;color:#2a25d6">XSCKD025928</div>
<div class="t" style="padding-top:.08em;left:387px;top:568px;font-size:15.6px;color:#404040">延锋（常州）汽车零...</div>
<div class="t" style="padding-top:.08em;left:564px;top:568px;font-size:15.6px;color:#404040">厦门劲博汇科技有限...</div>
<div class="t" style="left:741px;top:570px;font-size:16px;color:#404040">4024A000050002</div>
<div class="t" style="padding-top:.08em;left:918px;top:568px;font-size:16px;color:#404040">按摩气袋-左下</div>
<div class="t" style="left:1131px;top:570px;font-size:16px;color:#404040">Pcs</div>
<div class="t" style="left:1228px;top:570px;width:170px;text-align:right;font-size:16px;color:#404040">400</div>
<div class="t" style="padding-top:.08em;left:1415px;top:568px;font-size:16px;color:#404040">厦门劲博汇仓库</div>
<div class="t" style="padding-top:.08em;left:1592px;top:568px;font-size:16px;color:#404040">10月24日出货</div>
<div class="a" style="left:76px;top:433px;width:1px;height:164px;background:#e3e4e8"></div>
<div class="a" style="left:200px;top:433px;width:1px;height:164px;background:#e3e4e8"></div>
<div class="a" style="left:377px;top:433px;width:1px;height:164px;background:#e3e4e8"></div>
<div class="a" style="left:555px;top:433px;width:1px;height:164px;background:#e3e4e8"></div>
<div class="a" style="left:732px;top:433px;width:1px;height:164px;background:#e3e4e8"></div>
<div class="a" style="left:909px;top:433px;width:1px;height:164px;background:#e3e4e8"></div>
<div class="a" style="left:1122px;top:433px;width:1px;height:164px;background:#e3e4e8"></div>
<div class="a" style="left:1228px;top:433px;width:1px;height:164px;background:#e3e4e8"></div>
<div class="a" style="left:1406px;top:433px;width:1px;height:164px;background:#e3e4e8"></div>
<div class="a" style="left:1583px;top:433px;width:1px;height:164px;background:#e3e4e8"></div>
<div class="a" style="left:1760px;top:433px;width:1px;height:164px;background:#e3e4e8"></div>
<div class="a" style="left:28px;top:433px;width:1px;height:164px;background:#e3e4e8"></div>
<svg class="a" style="left:1763px;top:434px" width="10" height="8" viewBox="0 0 10 8"><path d="M1.5 6L5 2.5L8.5 6" fill="none" stroke="#bbb" stroke-width="1.1"/></svg>
<div class="a" style="left:28px;top:959px;width:1737px;height:42px;background:#f3f3f4;border-top:1px solid #dcdcdc;border-bottom:1px solid #e6e6e6"></div>
<div class="a" style="left:1229px;top:960px;width:1px;height:40px;background:#dcdcdc"></div>
<div class="a" style="left:1406px;top:960px;width:1px;height:40px;background:#dcdcdc"></div>
<div class="t" style="left:1300px;top:972px;width:103px;text-align:right;font-size:14px;font-weight:bold;color:#444">1,440</div>
<div class="t" style="padding-top:.08em;left:1190px;top:1015px;font-size:16px;color:#555">已选 <span style="color:#f08a24">0</span> 行</div>
<div class="t" style="padding-top:.08em;left:1276px;top:1015px;font-size:16px;color:#444">第</div>
<div class="a" style="left:1297px;top:1008px;width:44px;height:33px;border:1px solid #d9d9d9;border-radius:2px;background:#fff"></div>
<div class="t" style="left:1297px;top:1013px;width:36px;text-align:right;font-size:14px;color:#444">1</div>
<div class="t" style="padding-top:.08em;left:1345px;top:1015px;font-size:16px;color:#444">页 / 1 页</div>
<svg class="a" style="left:1418px;top:1014px" width="100" height="18" viewBox="0 0 100 18"><g fill="none" stroke="#c4c6cc" stroke-width="1.4"><path d="M2 2V16M13 2L7 9L13 16"/><path d="M39 2L33 9L39 16"/><path d="M60 2L66 9L60 16"/><path d="M84 2L90 9L84 16M96 2V16"/></g></svg>
<div class="t" style="padding-top:.08em;left:1532px;top:1015px;font-size:16px;color:#444">每页显示</div>
<div class="a" style="left:1599px;top:1007px;width:95px;height:35px;border:1px solid #d0d0d0;border-radius:3px;background:#fff"></div>
<div class="a" style="left:1662px;top:1008px;width:31px;height:33px;background:#f7f7f7;border-left:1px solid #ddd"></div>
<svg class="a" style="left:1670px;top:1019px" width="14" height="10" viewBox="0 0 14 10"><path d="M1.5 2L7 7.5L12.5 2" fill="none" stroke="#888" stroke-width="1.2"/></svg>
<div class="t" style="left:1605px;top:1014px;font-size:17px;color:#222">1000</div>
<div class="t" style="padding-top:.08em;left:1700px;top:1015px;font-size:16px;color:#444">行/共4行</div>
<div class="a" style="left:1775px;top:213px;width:38px;height:638px;background:#f8f9fc"></div>
<div class="a" style="left:1766px;top:851px;width:47px;height:95px;background:#fbfbfd"></div>
<div class="a" style="left:1765px;top:901px;width:46px;height:46px;border-radius:23px 0 0 23px;background:#fff;box-shadow:-1px 3px 5px rgba(0,0,0,0.05)"></div>
<div class="a" style="left:1766px;top:946px;width:47px;height:72px;background:#fff;box-shadow:0 -3px 5px rgba(0,0,0,0.05)"></div>
<svg class="a" style="left:1775px;top:868px" width="28" height="22" viewBox="0 0 28 22"><path d="M7 20H21A5.5 5.5 0 0 0 21.5 9A7.5 7.5 0 0 0 7 8A6 6 0 0 0 7 20Z" fill="none" stroke="#5b86e8" stroke-width="1.6"/></svg>
<div class="a" style="left:1770px;top:907px;width:34px;height:34px;border-radius:50%;background:#e87fa8"></div>
<div class="t" style="padding-top:.08em;left:1776px;top:912px;font-size:12px;color:#fff;font-weight:bold">中</div>
<div class="t" style="left:1786px;top:922px;font-size:13px;color:#fff;font-weight:bold">A</div>
<svg class="a" style="left:1776px;top:960px" width="28" height="28" viewBox="0 0 28 28"><circle cx="14" cy="14" r="12" fill="none" stroke="#5b86e8" stroke-width="1.7"/><circle cx="10" cy="12" r="1.3" fill="#5b86e8"/><circle cx="18" cy="12" r="1.3" fill="#5b86e8"/><path d="M9 17A6 6 0 0 0 19 17" fill="none" stroke="#5b86e8" stroke-width="1.6"/></svg>
<svg class="a" style="left:1781px;top:996px" width="18" height="14" viewBox="0 0 18 14"><path d="M2 2L7 7L2 12M9 2L14 7L9 12" fill="none" stroke="#8aa6f0" stroke-width="1.3"/></svg>
<div class="a" style="left:5px;top:120px;width:1808px;height:953px;overflow:hidden;border-radius:0 0 8px 8px"><div class="a" style="left:23px;top:849px;width:350px;height:57px;background:#fff;border-radius:29px;box-shadow:0 -20px 150px 50px rgba(0,0,0,0.075),0 2px 8px rgba(0,0,0,0.08)"></div></div>
<svg class="a" style="left:52px;top:990px" width="16" height="14" viewBox="0 0 16 14"><path d="M8 2L3 7L8 12M14 2L9 7L14 12" fill="none" stroke="#888" stroke-width="1.4"/></svg>
<div class="a" style="left:88px;top:984px;width:1px;height:27px;background:#e2e2e2"></div>
<div class="a" style="left:100px;top:977px;width:208px;height:41px;background:#f6f6f8;border-radius:20px"></div>
<div class="a" style="left:109px;top:987px;width:20px;height:20px;border-radius:50%;background:#222026"></div>
<div class="a" style="left:116px;top:994px;width:6.5px;height:6.5px;border-radius:1px;background:#fff"></div>
<div class="t" style="left:138px;top:988px;font-size:16px;color:#333">00:12</div>
<svg class="a" style="left:201px;top:987px" width="21" height="21" viewBox="0 0 21 21"><path d="M4.5 6A7 7 0 1 1 3.5 11" fill="none" stroke="#8a8a8e" stroke-width="1.6"/><path d="M3.5 2.5V7H8" fill="none" stroke="#8a8a8e" stroke-width="1.6"/></svg>
<div class="a" style="left:244px;top:990px;width:3px;height:15px;background:#8a8a8e;border-radius:1px"></div>
<div class="a" style="left:252px;top:990px;width:3px;height:15px;background:#8a8a8e;border-radius:1px"></div>
<svg class="a" style="left:278px;top:987px" width="20" height="21" viewBox="0 0 20 21"><path d="M2.5 4.5H17.5M7.5 4.5V2H12.5V4.5M4.5 4.5L5.5 19H14.5L15.5 4.5M8 8V16M12 8V16" fill="none" stroke="#8a8a8e" stroke-width="1.6"/></svg>
<div class="a" style="left:319px;top:984px;width:1px;height:27px;background:#e2e2e2"></div>
<svg class="a" style="left:337px;top:987px" width="22" height="21" viewBox="0 0 22 21"><path d="M3 3L19 9L12 11.5L9.5 18.5Z" fill="none" stroke="#6a6a6e" stroke-width="1.7" stroke-linejoin="round"/><path d="M12 11.5L18 17.5" stroke="#6a6a6e" stroke-width="1.7"/></svg>
<div class="a" style="left:1170px;top:174px;width:335px;height:396px;background:#fff;border-radius:4px;box-shadow:0 1px 4px rgba(0,0,0,0.2)"></div>
<div class="a" style="left:1188px;top:185px;width:19px;height:19px;background:#d9dce3;border-radius:2px"></div>
<svg class="a" style="left:1190px;top:187px" width="15" height="15" viewBox="0 0 15 15"><circle cx="7" cy="7" r="4.5" fill="none" stroke="#fff" stroke-width="1.5"/><path d="M10.5 10.5L13 13" stroke="#fff" stroke-width="1.5"/></svg>
<div class="t" style="padding-top:.08em;left:1214px;top:186px;font-size:14px;color:#555">搜索<span style="color:#333;margin-left:12px">“xsck”</span></div>
<div class="t" style="padding-top:.08em;left:1437px;top:186px;font-size:14px;color:#444">共 <span style="color:#3a7ee6">12</span> 项</div>
<div class="a" style="left:1172px;top:219px;width:331px;height:1px;background:#e6e6e6"></div>
<div class="a" style="left:1172px;top:333px;width:320px;height:61px;background:#eef1fb"></div>
<svg class="a" style="left:1188px;top:229px" width="19" height="19" viewBox="0 0 19 19"><rect width="19" height="19" rx="2" fill="#5a98f0"/><rect x="4" y="4" width="4.5" height="4.5" rx=".8" fill="#fff"/><rect x="10.5" y="4" width="4.5" height="4.5" rx=".8" fill="#fff"/><rect x="4" y="10.5" width="4.5" height="4.5" rx=".8" fill="#fff"/><rect x="10.5" y="10.5" width="4.5" height="4.5" rx=".8" fill="#fff"/></svg>
<div class="t" style="padding-top:.08em;left:1213px;top:230px;font-size:14px;color:#333">XSCKD<span style="margin-left:7px">销售出库单</span></div>
<div class="t" style="padding-top:.08em;left:1188px;top:257px;font-size:14px;letter-spacing:0.6px;color:#9a9a9a">供应链>销售管理>出货处理</div>
<svg class="a" style="left:1188px;top:286px" width="19" height="19" viewBox="0 0 19 19"><rect width="19" height="19" rx="2" fill="#5a98f0"/><rect x="4" y="4" width="4.5" height="4.5" rx=".8" fill="#fff"/><rect x="10.5" y="4" width="4.5" height="4.5" rx=".8" fill="#fff"/><rect x="4" y="10.5" width="4.5" height="4.5" rx=".8" fill="#fff"/><rect x="10.5" y="10.5" width="4.5" height="4.5" rx=".8" fill="#fff"/></svg>
<div class="t" style="padding-top:.08em;left:1213px;top:287px;font-size:14px;color:#333">XSCKD<span style="margin-left:7px">销售出库单</span></div>
<div class="t" style="padding-top:.08em;left:1188px;top:314px;font-size:14px;letter-spacing:0.6px;color:#9a9a9a">供应链>库存管理>销售出入库</div>
<svg class="a" style="left:1188px;top:343px" width="19" height="19" viewBox="0 0 19 19"><rect width="19" height="19" rx="2" fill="#5a98f0"/><rect x="4" y="4" width="4.5" height="4.5" rx=".8" fill="#fff"/><rect x="10.5" y="4" width="4.5" height="4.5" rx=".8" fill="#fff"/><rect x="4" y="10.5" width="4.5" height="4.5" rx=".8" fill="#fff"/><rect x="10.5" y="10.5" width="4.5" height="4.5" rx=".8" fill="#fff"/></svg>
<div class="t" style="padding-top:.08em;left:1213px;top:344px;font-size:14px;color:#3a6ee8">XSCKDLB<span style="margin-left:7px">销售出库单列表</span></div>
<div class="t" style="padding-top:.08em;left:1188px;top:371px;font-size:14px;letter-spacing:0.6px;color:#9a9a9a">供应链>销售管理>出货处理</div>
<svg class="a" style="left:1188px;top:400px" width="19" height="19" viewBox="0 0 19 19"><rect width="19" height="19" rx="2" fill="#5a98f0"/><rect x="4" y="4" width="4.5" height="4.5" rx=".8" fill="#fff"/><rect x="10.5" y="4" width="4.5" height="4.5" rx=".8" fill="#fff"/><rect x="4" y="10.5" width="4.5" height="4.5" rx=".8" fill="#fff"/><rect x="10.5" y="10.5" width="4.5" height="4.5" rx=".8" fill="#fff"/></svg>
<div class="t" style="padding-top:.08em;left:1213px;top:401px;font-size:14px;color:#333">XSCKDLB<span style="margin-left:7px">销售出库单列表</span></div>
<div class="t" style="padding-top:.08em;left:1188px;top:428px;font-size:14px;letter-spacing:0.6px;color:#9a9a9a">供应链>库存管理>销售出入库</div>
<svg class="a" style="left:1188px;top:457px" width="19" height="19" viewBox="0 0 19 19"><rect width="19" height="19" rx="2" fill="#5a98f0"/><rect x="4" y="4" width="4.5" height="4.5" rx=".8" fill="#fff"/><rect x="10.5" y="4" width="4.5" height="4.5" rx=".8" fill="#fff"/><rect x="4" y="10.5" width="4.5" height="4.5" rx=".8" fill="#fff"/><rect x="10.5" y="10.5" width="4.5" height="4.5" rx=".8" fill="#fff"/></svg>
<div class="t" style="padding-top:.08em;left:1213px;top:458px;font-size:14px;color:#333">XSCKHZBB<span style="margin-left:7px">销售出库汇总报表</span></div>
<div class="t" style="padding-top:.08em;left:1188px;top:485px;font-size:14px;letter-spacing:0.6px;color:#9a9a9a">供应链>销售管理>报表分析</div>
<svg class="a" style="left:1188px;top:514px" width="19" height="19" viewBox="0 0 19 19"><rect width="19" height="19" rx="2" fill="#5a98f0"/><rect x="4" y="4" width="4.5" height="4.5" rx=".8" fill="#fff"/><rect x="10.5" y="4" width="4.5" height="4.5" rx=".8" fill="#fff"/><rect x="4" y="10.5" width="4.5" height="4.5" rx=".8" fill="#fff"/><rect x="10.5" y="10.5" width="4.5" height="4.5" rx=".8" fill="#fff"/></svg>
<div class="t" style="padding-top:.08em;left:1213px;top:515px;font-size:14px;color:#333">XSCKMXBB<span style="margin-left:7px">销售出库明细报表</span></div>
<div class="t" style="padding-top:.08em;left:1188px;top:542px;font-size:14px;letter-spacing:0.6px;color:#9a9a9a">供应链>销售管理>报表分析</div>
<svg class="a" style="left:1442px;top:342px" width="20" height="20" viewBox="0 0 20 20"><path d="M10 1.8L12.4 6.9L18 7.5L13.8 11.3L15 16.8L10 14L5 16.8L6.2 11.3L2 7.5L7.6 6.9Z" fill="none" stroke="#999" stroke-width="1.3" stroke-linejoin="round"/></svg>
<div class="a" style="left:1492px;top:232px;width:10px;height:166px;background:#c5c5c5;border-radius:5px"></div>
<svg class="a" style="left:1492px;top:222px" width="10" height="7" viewBox="0 0 10 7"><path d="M1.5 5.5L5 2L8.5 5.5" fill="none" stroke="#bbb" stroke-width="1"/></svg>
<svg class="a" style="left:1492px;top:559px" width="10" height="7" viewBox="0 0 10 7"><path d="M1.5 1.5L5 5L8.5 1.5" fill="none" stroke="#bbb" stroke-width="1"/></svg>
<svg class="a" style="left:1357px;top:364px" width="22" height="28" viewBox="0 0 22 28"><path d="M7 14V4A2 2 0 0 1 11 4V12V10A2 2 0 0 1 15 10V13A2 2 0 0 1 18.5 13.5V19C18.5 23 16 26 12 26H10C7 26 5 24 3.5 21L1.5 17A2 2 0 0 1 5 15.5Z" fill="#fff" stroke="#222" stroke-width="1.2" stroke-linejoin="round"/></svg>
<!--PAGE_END-->
<div id="black" class="a"></div>
<script>
(function(){
var t=document.createElement('span');t.style.cssText='position:absolute;visibility:hidden;font-size:100px;white-space:nowrap;font-family:"Liberation Sans",sans-serif';t.textContent='\u5e93\u5b58\u67e5\u8be2';document.body.appendChild(t);var w=t.getBoundingClientRect().width;document.body.removeChild(t);
if(w>=380)return;
var re=/[\u2E80-\u9FFF\uF900-\uFAFF\uFF00-\uFFEF\u3000-\u303F]/;var pu=/[\uFF08\uFF09\u3001\u3002\uFF0C\uFF1A]/;
var wk=document.createTreeWalker(document.body,NodeFilter.SHOW_TEXT,null);var ns=[];var n;
while((n=wk.nextNode())){if(re.test(n.nodeValue)&&!(n.parentNode&&n.parentNode instanceof SVGElement))ns.push(n);}
ns.forEach(function(nd){var s=nd.nodeValue;var f=document.createDocumentFragment();var b='';var bw=parseInt(getComputedStyle(nd.parentNode).fontWeight)>=600;
for(var i=0;i<s.length;i++){var c=s.charAt(i);if(re.test(c)){if(b){f.appendChild(document.createTextNode(b));b='';}var sp=document.createElement('span');sp.className=pu.test(c)?'cjp':(bw?'cj cjb':'cj');f.appendChild(sp);}else b+=c;}
if(b)f.appendChild(document.createTextNode(b));nd.parentNode.replaceChild(f,nd);});
})();
</script>
</body></html>
